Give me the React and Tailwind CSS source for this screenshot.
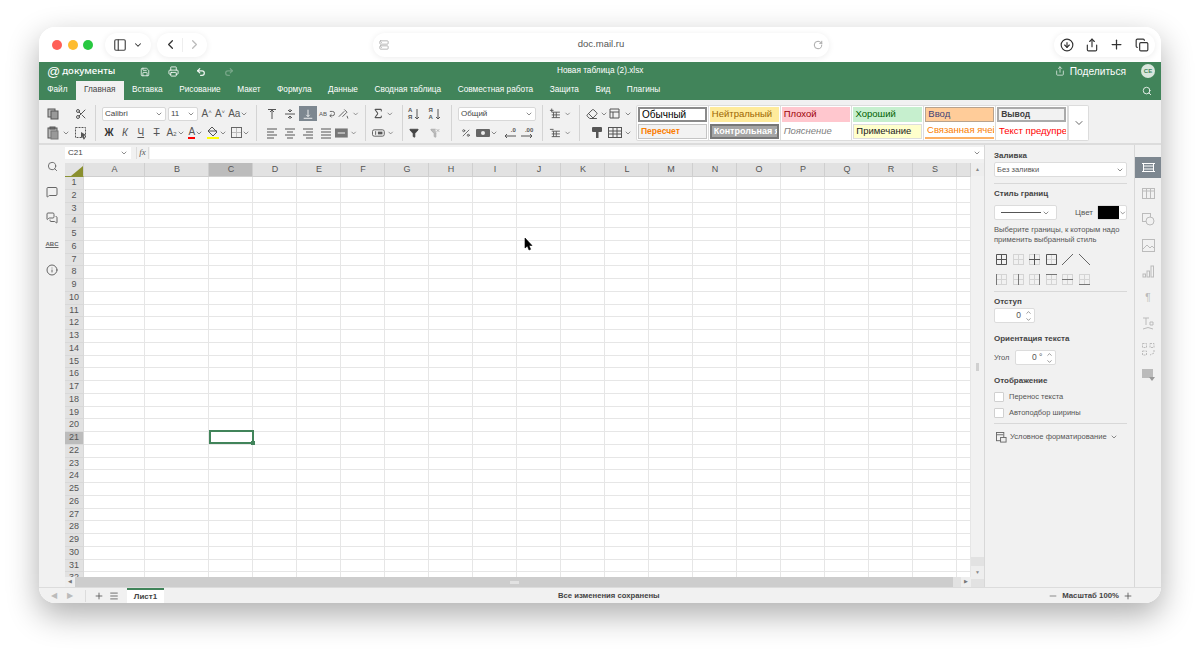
import React from "react";
import { Search, MessageSquare, MessagesSquare, Info, CircleArrowDown, Share, Plus, Copy, ChevronDown, ChevronLeft, ChevronRight, ChevronUp, RotateCw, PanelLeft, Save, Printer, Undo2, Redo2, Scissors, Sigma, Funnel, FunnelX, Percent, Eraser, Minus, Menu, Server } from "lucide-react";

const font = "font-['Liberation_Sans',Arial,sans-serif]";
const Chev = ({ c = "text-[#555]", s = 8 }) => <ChevronDown size={s} strokeWidth={2} className={c} />;

const Ic = ({ children, w = 14 }) => (
  <svg width={w} height="14" viewBox="0 0 14 14" fill="none" stroke="#555" strokeWidth="1">{children}</svg>
);
const TB = ({ children, className = "w-[18px]" }) => <div className={`flex h-[16px] items-center justify-center gap-[2px] ${className}`}>{children}</div>;
const Sep = () => <div className="mx-[6px] h-[36px] w-px shrink-0 bg-[#d4d4d4]" />;
const Col = ({ className, children }) => <div className={`flex h-[35px] shrink-0 flex-col justify-between ${className}`}>{children}</div>;
const Row = ({ children }) => <div className="flex h-[16px] items-center">{children}</div>;
const Lines = ({ d }) => <Ic>{d.map((l, i) => <path key={i} d={l} />)}</Ic>;

const CopyI = () => <Ic><rect x="2" y="2" width="7" height="8" fill="#bbb" /><rect x="5" y="4" width="7" height="8" fill="#999" /></Ic>;
const PasteI = () => <Ic><rect x="2" y="2" width="9" height="10" fill="#bbb" /><rect x="5" y="5" width="7" height="8" fill="#999" stroke="#777" /><rect x="4" y="1" width="5" height="2" fill="#777" /></Ic>;
const SelI = () => <Ic><rect x="1.5" y="1.5" width="10" height="10" strokeDasharray="2 1" /><path d="M7 6l5 3-2 1 1 3-1.5.5-1-3L7 12z" fill="#555" stroke="none" /></Ic>;

const styles1 = [
  ["Обычный", "bg-white text-black border-2 border-[#8a8a8a] text-[10px]"],
  ["Нейтральный", "bg-[#ffeb9c] text-[#9c6500] text-[9.5px]"],
  ["Плохой", "bg-[#ffc7ce] text-[#9c0006] text-[9.5px]"],
  ["Хороший", "bg-[#c6efce] text-[#006100] text-[9.5px]"],
  ["Ввод", "bg-[#ffcc99] text-[#3f3f76] border border-[#b7a28e] text-[9.5px]"],
  ["Вывод", "bg-[#f2f2f2] text-[#3f3f3f] font-bold border-2 border-[#aaaaaa] text-[8.5px]"],
];
const styles2 = [
  ["Пересчет", "bg-[#f2f2f2] text-[#fa7d00] font-bold border border-[#c4c4c4] text-[8.5px]"],
  ["Контрольная ячейка", "bg-[#a5a5a5] text-white font-bold border-2 border-[#777] text-[9px]"],
  ["Пояснение", "bg-white text-[#7f7f7f] italic text-[9.5px]"],
  ["Примечание", "bg-[#ffffcc] text-[#222] border border-[#dddddd] text-[9.5px]"],
  ["Связанная ячейка", "bg-white text-[#fa7d00] border-b-2 border-[#fdb064] text-[9.5px]"],
  ["Текст предупреждения", "bg-white text-[#ff0000] text-[9.5px]"],
];
const StyleRow = ({ items }) => (
  <div className="flex h-[17px]">
    {items.map(([t, c]) => (
      <div key={t} className="w-[72px] border-r border-[#dcdcdc] px-px py-px">
        <div className={`flex h-[15px] items-center overflow-hidden whitespace-nowrap px-[2px] ${c}`}>{t}</div>
      </div>
    ))}
  </div>
);

const Toolbar = () => (
  <div className="flex h-[45px] shrink-0 items-center border-b-2 border-[#dcdcdc] bg-[#f1f1f1] pl-[6px] pt-[3px]">
    <Col className="w-[44px]">
      <Row><TB className="w-[16px]"><CopyI /></TB><div className="w-[12px]" /><TB className="w-[16px]"><Scissors size={12} color="#555" /></TB></Row>
      <Row><TB className="w-[26px]"><PasteI /><Chev /></TB><div className="w-[2px]" /><TB className="w-[16px]"><SelI /></TB></Row>
    </Col>
    <Sep />
    <Col className="w-[148px]">
      <Row>
        <div className="flex h-[14px] w-[64px] items-center justify-between rounded-[2px] border border-[#d8d8d8] bg-white px-[2px] text-[8px] text-[#444]">Calibri<Chev /></div>
        <div className="ml-[2px] flex h-[14px] w-[30px] items-center justify-between rounded-[2px] border border-[#d8d8d8] bg-white px-[2px] text-[8px] text-[#444]">11<Chev /></div>
        <div className="ml-[2px] flex w-[50px] items-center justify-around text-[10px] text-[#555]"><span>A<sup className="text-[6px]">˄</sup></span><span>A<sup className="text-[6px]">˅</sup></span><span className="flex items-center">Aa<Chev /></span></div>
      </Row>
      <Row>
        <div className="flex w-full items-center justify-between pl-[1px] text-[10px] text-[#555]">
          <b className="w-[12px] text-center text-[#333]">Ж</b><i className="w-[12px] text-center">К</i><u className="w-[12px] text-center">Ч</u><s className="w-[12px] text-center">Т</s>
          <span className="flex items-center">A<sub className="text-[6px]">2</sub><Chev /></span>
          <span className="flex items-center"><span className="border-b-2 border-[#ff0000] leading-[11px]">A</span><Chev /></span>
          <span className="flex items-center"><span className="border-b-2 border-[#ffff00] leading-[0]"><svg width="12" height="11" viewBox="0 0 12 11" fill="none" stroke="#555"><path d="M5 1l5 5-4 4-5-5z" /><path d="M1 5h9" /></svg></span><Chev /></span>
          <span className="flex items-center"><svg width="11" height="11" viewBox="0 0 11 11" fill="none" stroke="#666"><rect x=".5" y=".5" width="10" height="10" /><path d="M5.5 1v9M1 5.5h9" stroke="#bbb" /></svg><Chev /></span>
        </div>
      </Row>
    </Col>
    <Sep />
    <Col className="w-[96px]">
      <Row>
        <TB><Lines d={["M3 2.5h8", "M7 3v9", "M5 5l2-2 2 2"]} /></TB>
        <TB><Lines d={["M2 7h10", "M7 2v3M7 9v3", "M5 3l2 2 2-2M5 11l2-2 2 2"]} /></TB>
        <div className="flex h-[15px] w-[18px] items-center justify-center bg-[#7d8790]"><svg width="12" height="12" viewBox="0 0 14 14" fill="none" stroke="#fff"><path d="M2 12h10M7 2v8M5 8l2 2 2-2" /></svg></div>
        <TB className="w-[20px]"><span className="text-[6px] leading-none text-[#555]">AB</span><svg width="6" height="10" viewBox="0 0 7 10" fill="none" stroke="#555"><path d="M1 2h3a2 2 0 010 5H1M3 5L1 7l2 2" /></svg></TB>
        <TB className="w-[22px]"><Lines d={["M2 10L8 4", "M8 2l3 3-5 5", "M11 9l1 3"]} /><Chev /></TB>
      </Row>
      <Row>
        <TB><Lines d={["M2 3h10M2 6h7M2 9h10M2 12h7"]} /></TB>
        <TB><Lines d={["M2 3h10M4 6h6M2 9h10M4 12h6"]} /></TB>
        <TB><Lines d={["M2 3h10M5 6h7M2 9h10M5 12h7"]} /></TB>
        <TB><Lines d={["M2 3h10M2 6h10M2 9h10M2 12h10"]} /></TB>
        <TB className="w-[22px]"><svg width="14" height="12" viewBox="0 0 14 12" fill="#777"><rect y="1" width="14" height="10" /><path d="M3 6h8" stroke="#fff" /></svg><Chev /></TB>
      </Row>
    </Col>
    <Sep />
    <Col className="w-[24px]">
      <Row><TB className="w-[22px]"><Sigma size={13} color="#555" /><Chev /></TB></Row>
      <Row><TB className="w-[22px]"><svg width="14" height="10" viewBox="0 0 14 10" fill="none" stroke="#555"><rect x=".5" y="1.5" width="13" height="7" rx="2" /><path d="M4 3v4" /><rect x="7" y="4" width="4" height="2" fill="#555" /></svg><Chev /></TB></Row>
    </Col>
    <Sep />
    <Col className="-ml-[5px] w-[41px]">
      <Row><TB className="w-[22px]"><span className="flex flex-col text-[6px] font-bold leading-[7px] text-[#555]"><span>A</span><span>Я</span></span><svg width="6" height="12" viewBox="0 0 6 12" fill="none" stroke="#555"><path d="M3 1v10M1 9l2 2 2-2" /></svg></TB><TB className="w-[22px]"><span className="flex flex-col text-[6px] font-bold leading-[7px] text-[#555]"><span>Я</span><span>A</span></span><svg width="6" height="12" viewBox="0 0 6 12" fill="none" stroke="#555"><path d="M3 1v10M1 9l2 2 2-2" /></svg></TB></Row>
      <Row><TB className="w-[22px]"><Funnel size={10} fill="#444" color="#444" /></TB><TB className="w-[22px]"><FunnelX size={10} fill="#bbb" color="#aaa" /></TB></Row>
    </Col>
    <Sep />
    <Col className="w-[78px]">
      <Row><div className="flex h-[14px] w-[78px] items-center justify-between rounded-[2px] border border-[#d8d8d8] bg-white px-[2px] text-[8px] text-[#444]">Общий<Chev /></div></Row>
      <Row>
        <div className="flex w-full items-center justify-around">
          <Percent size={10} color="#555" />
          <span className="flex items-center"><svg width="14" height="10" viewBox="0 0 14 10" fill="#666"><rect y="1" width="14" height="8" rx="1" /><circle cx="7" cy="5" r="2" fill="#eee" /></svg><Chev /></span>
          <span className="flex flex-col items-end text-[6px] font-bold leading-[6px] text-[#555]">.0<svg width="12" height="5" viewBox="0 0 12 5" fill="none" stroke="#555"><path d="M12 3H1M3 1L1 3l2 2" /></svg></span>
          <span className="flex flex-col items-end text-[6px] font-bold leading-[6px] text-[#555]">.00<svg width="12" height="5" viewBox="0 0 12 5" fill="none" stroke="#555"><path d="M0 3h11M9 1l2 2-2 2" /></svg></span>
        </div>
      </Row>
    </Col>
    <Sep />
    <Col className="w-[24px]">
      <Row><TB className="w-[22px]"><Lines d={["M3 5h9M3 8h9M3 11h9M5 5v6M8 5v6", "M1 3h4M3 1v4"]} /><Chev /></TB></Row>
      <Row><TB className="w-[22px]"><Lines d={["M3 5h9M3 8h9M3 11h9M5 5v6M8 5v6", "M1 3h4"]} /><Chev /></TB></Row>
    </Col>
    <Sep />
    <Col className="w-[46px]">
      <Row><TB className="w-[22px]"><Eraser size={12} color="#555" /><Chev /></TB><TB className="w-[24px]"><Lines d={["M2 2h9v9H2z", "M2 5h9M5 5v6"]} /><Chev /></TB></Row>
      <Row><TB className="w-[22px]"><svg width="12" height="13" viewBox="0 0 12 13" fill="#555"><rect x="1" y="1" width="10" height="5" rx="1" /><rect x="5" y="6" width="2.5" height="6" /></svg></TB><TB className="w-[24px]"><svg width="14" height="11" viewBox="0 0 14 11" fill="none" stroke="#555"><rect x=".5" y=".5" width="13" height="10" /><path d="M1 4h12M1 7h12M5 1v9M9 1v9" /></svg><Chev /></TB></Row>
    </Col>
    <div className="ml-[4px] h-[36px] w-[433px] shrink-0 rounded-l-[2px] border border-[#dcdcdc] bg-white">
      <StyleRow items={styles1} />
      <StyleRow items={styles2} />
    </div>
    <div className="flex h-[36px] w-[20px] shrink-0 items-center justify-center rounded-r-[2px] border border-l-0 border-[#dcdcdc] bg-white"><ChevronDown size={12} color="#666" /></div>
  </div>
);

const colsT = [["A", "w-[61px]"], ["B", "w-[64px]"], ["C", "w-[44px]"], ...("DEFGHIJKLMNOPQRS".split("").map((l) => [l, "w-[44px]"])), ["", "w-[14px]"]];
const rows = Array.from({ length: 32 }, (_, i) => i + 1);

const Sheet = () => (
  <div className="relative min-h-0 flex-1 overflow-hidden bg-white">
    <div className="flex h-[14px] bg-[#e2e2e2] text-[9px] text-[#555]">
      <div className="flex h-[14px] w-[19px] shrink-0 items-end justify-end border-r border-[#d0d0d0] border-b border-b-[#8a9233]">
        <div className="h-0 w-0 border-b-[10px] border-l-[12px] border-b-[#8a8f2e] border-l-transparent" />
      </div>
      {colsT.map(([l, w]) => (
        <div key={l || "T"} className={`flex shrink-0 items-center justify-center border-r border-b border-[#cfcfcf] pl-px ${w} ${l === "C" ? "bg-[#bcbcbc]" : ""}`}>{l}</div>
      ))}
    </div>
    {rows.map((r) => (
      <div key={r} className="flex h-[12.75px]">
        <div className={`flex w-[19px] shrink-0 items-center justify-center border-r border-b border-[#d8d8d8] text-[9px] text-[#555] ${r === 21 ? "bg-[#bcbcbc]" : "bg-[#e2e2e2]"}`}>{r}</div>
        {colsT.map(([l, w]) => <div key={l || "T"} className={`shrink-0 border-r border-b border-[#e6e6e6] ${w}`} />)}
      </div>
    ))}
    <div className="absolute left-[144px] top-[267px] h-[14px] w-[45px] border-2 border-[#41845a]">
      <div className="absolute bottom-[-3px] right-[-3px] h-[4px] w-[4px] bg-[#41845a]" />
    </div>
    <svg className="absolute left-[459px] top-[74px]" width="10" height="14" viewBox="0 0 10 14"><path d="M1 1v10l2.4-2 1.6 4 1.6-.7-1.6-3.8H8z" fill="#000" stroke="#000" strokeWidth=".6" /></svg>
  </div>
);

const BorderI = ({ d, dark }) => (
  <svg width="11" height="11" viewBox="0 0 11 11" fill="none" stroke={dark ? "#666" : "#ccc"}>
    <rect x=".5" y=".5" width="10" height="10" stroke="#d4d4d4" />
    <path d="M5.5 1v9M1 5.5h9" stroke="#d4d4d4" />
    <path d={d} stroke={dark ? "#555" : "#777"} />
  </svg>
);
const Label = ({ children, className = "" }) => <div className={`text-[8px] font-bold leading-[10px] text-[#444] ${className}`}>{children}</div>;
const Divider = ({ className }) => <div className={`h-px w-full bg-[#d8d8d8] ${className}`} />;
const Spin = ({ v, w }) => (
  <div className={`flex h-[15px] items-center justify-end rounded-[2px] border border-[#dcdcdc] bg-white pr-[2px] text-[8.5px] text-[#555] ${w}`}>
    {v}
    <span className="ml-[4px] flex flex-col"><ChevronUp size={7} color="#555" /><ChevronDown size={7} color="#555" /></span>
  </div>
);
const Check = ({ t, className }) => (
  <div className={`flex h-[11px] items-center gap-[5px] text-[7.5px] text-[#555] ${className}`}>
    <div className="h-[10px] w-[10px] rounded-[1px] border border-[#d0d0d0] bg-white" />{t}
  </div>
);

const Panel = () => (
  <div className="flex w-[150px] shrink-0 flex-col border-l border-[#d8d8d8] bg-[#f1f1f1] pl-[9px] pr-[7px] pt-[6px]">
    <Label>Заливка</Label>
    <div className="mt-px flex h-[15px] items-center justify-between rounded-[2px] border border-[#dcdcdc] bg-white px-[2px] text-[7.5px] text-[#555]">Без заливки<Chev /></div>
    <Divider className="mt-[6px]" />
    <Label className="mt-[5px]">Стиль границ</Label>
    <div className="mt-[6px] flex h-[15px] items-center justify-between">
      <div className="flex h-[15px] w-[63px] items-center justify-between rounded-[2px] border border-[#dcdcdc] bg-white px-[6px]"><div className="h-px w-[40px] bg-[#555]" /><Chev /></div>
      <div className="flex items-center gap-[4px] text-[8px] text-[#555]">Цвет
        <div className="flex h-[15px] w-[30px] items-center rounded-[2px] border border-[#dcdcdc] bg-white"><div className="h-[13px] w-[22px] bg-black" /><Chev /></div>
      </div>
    </div>
    <div className="mt-[5px] text-[7.6px] leading-[10px] text-[#555]">Выберите границы, к которым надо применить выбранный стиль</div>
    <div className="mt-[9px] flex gap-[5.5px] pl-[2px]">
      <BorderI dark d="M.5.5h10v10H.5zM5.5 0v11M0 5.5h11" />
      <BorderI d="" />
      <BorderI dark d="M5.5 0v11M0 5.5h11" />
      <BorderI dark d="M.5.5h10v10H.5z" />
      <svg width="11" height="11" viewBox="0 0 11 11" fill="none" stroke="#666"><path d="M0 11L11 0" /></svg>
      <svg width="11" height="11" viewBox="0 0 11 11" fill="none" stroke="#666"><path d="M0 0l11 11" /></svg>
    </div>
    <div className="mt-[9px] flex gap-[5.5px] pl-[2px]">
      <BorderI d="M.5 0v11" /><BorderI d="M5.5 0v11" /><BorderI d="M10.5 0v11" /><BorderI d="M0 .5h11" /><BorderI d="M0 5.5h11" /><BorderI d="M0 10.5h11" />
    </div>
    <Divider className="mt-[6px]" />
    <Label className="mt-[5px]">Отступ</Label>
    <Spin v="0" w="mt-px w-[41px]" />
    <Label className="mt-[11px]">Ориентация текста</Label>
    <div className="mt-[6px] flex items-center gap-[6px] text-[7.5px] text-[#555]">Угол <Spin v="0 °" w="w-[41px]" /></div>
    <Label className="mt-[11px]">Отображение</Label>
    <Check t="Перенос текста" className="mt-[5px]" />
    <Check t="Автоподбор ширины" className="mt-[5px]" />
    <Divider className="mt-[5px]" />
    <div className="mt-[6px] flex h-[14px] items-center gap-[3px] pl-[2px] text-[7.6px] text-[#555]">
      <svg width="11" height="11" viewBox="0 0 12 12" fill="none" stroke="#666"><rect x=".5" y=".5" width="8" height="9" /><path d="M1 3h7" /><rect x="5" y="6" width="6" height="5" fill="#eee" /></svg>
      <span>Условное форматирование</span><Chev />
    </div>
  </div>
);

const railIcons = [
  <svg key="1" width="13" height="11" viewBox="0 0 13 11" fill="none" stroke="#fff"><rect x="1.5" y="1.5" width="10" height="8" /><path d="M0 1.5h13M0 9.5h13M1.5 4h10M1.5 7h10" /></svg>,
  <svg key="2" width="13" height="11" viewBox="0 0 13 11" fill="none" stroke="#bbb"><rect x=".5" y=".5" width="12" height="10" /><path d="M4.5 0v11M8.5 0v11M0 3h13" /></svg>,
  <svg key="3" width="13" height="13" viewBox="0 0 13 13" fill="none" stroke="#bbb"><rect x=".5" y=".5" width="8" height="8" /><circle cx="8" cy="8" r="4" fill="#f1f1f1" /></svg>,
  <svg key="4" width="13" height="13" viewBox="0 0 13 13" fill="none" stroke="#bbb"><rect x=".5" y=".5" width="12" height="12" /><path d="M1 10l4-4 3 3 2-2 2 2" /></svg>,
  <svg key="5" width="13" height="13" viewBox="0 0 13 13" fill="none" stroke="#bbb"><rect x="1" y="9" width="2.5" height="3" /><rect x="5" y="6" width="2.5" height="6" /><rect x="9" y="1" width="2.5" height="11" /></svg>,
  <span key="6" className="text-[10px] leading-none text-[#bbb]">¶</span>,
  <svg key="7" width="13" height="14" viewBox="0 0 13 14" fill="none" stroke="#bbb"><path d="M1 1h6M4 1v7" /><path d="M8 5h3v3H8z" /><path d="M1 12q5-3 10 0" /></svg>,
  <svg key="8" width="13" height="13" viewBox="0 0 13 13" fill="none" stroke="#bbb" strokeDasharray="2 1"><rect x=".5" y=".5" width="4" height="4" /><rect x="8" y=".5" width="4" height="4" /><rect x=".5" y="8" width="4" height="4" /><path d="M12 7v3l-4 2" strokeDasharray="" /></svg>,
  <svg key="9" width="13" height="13" viewBox="0 0 13 13"><rect x="0" y="0" width="11" height="9" fill="#bbb" /><path d="M7 8h6l-3 4z" fill="#999" /></svg>,
];

export default function App() {
  return (
    <div className={`h-[655px] w-[1200px] overflow-hidden bg-white pl-[39px] pt-[27px] ${font}`}>
      <div className="flex h-[576px] w-[1122px] flex-col overflow-hidden rounded-[16px] bg-white shadow-[0_12px_32px_rgba(0,0,0,0.32)]">
        {/* Safari bar */}
        <div className="flex h-[35px] shrink-0 items-center bg-white pl-[13px] pr-[6px]">
          <div className="h-[10px] w-[10px] rounded-full bg-[#ff5f57]" />
          <div className="ml-[5.5px] h-[10px] w-[10px] rounded-full bg-[#febc2e]" />
          <div className="ml-[5.5px] h-[10px] w-[10px] rounded-full bg-[#28c840]" />
          <div className="ml-[12px] flex h-[24px] w-[46px] items-center justify-center gap-[6px] rounded-full bg-white shadow-[0_1px_6px_rgba(0,0,0,0.08)]"><PanelLeft size={14} color="#444" /><ChevronDown size={10} color="#333" strokeWidth={2.5} /></div>
          <div className="ml-[6px] flex h-[24px] w-[50px] items-center justify-center gap-[4px] rounded-full bg-white shadow-[0_1px_6px_rgba(0,0,0,0.08)]"><ChevronLeft size={15} color="#333" /><div className="h-[14px] w-px bg-[#eee]" /><ChevronRight size={15} color="#bbb" /></div>
          <div className="ml-[166px] flex h-[24px] w-[456px] items-center justify-between rounded-full bg-white px-[6px] shadow-[0_1px_6px_rgba(0,0,0,0.08)]">
            <Server size={10} color="#aaa" />
            <span className="text-[9.5px] text-[#555]">doc.mail.ru</span>
            <RotateCw size={10} color="#999" />
          </div>
          <div className="ml-auto flex h-[24px] w-[101px] items-center justify-between rounded-full bg-white px-[6px] shadow-[0_1px_6px_rgba(0,0,0,0.08)]">
            <CircleArrowDown size={14} color="#333" /><Share size={14} color="#333" /><Plus size={15} color="#333" /><Copy size={14} color="#333" />
          </div>
        </div>
        {/* Green header */}
        <div className="h-[38px] shrink-0 bg-[#41845a] text-white">
          <div className="relative flex h-[19px] items-center pl-[8px]">
            <span className="text-[13px] leading-none">@</span>
            <span className="ml-[2px] font-['Noto_Sans',sans-serif] text-[9.6px] font-medium">документы</span>
            <div className="absolute left-[101px] flex items-center gap-[17.5px] text-white/90">
              <Save size={10} /><Printer size={11} /><Undo2 size={10} strokeWidth={3} /><Redo2 size={10} strokeWidth={3} className="opacity-30" />
            </div>
            <span className="absolute left-[518px] text-[8.25px]">Новая таблица (2).xlsx</span>
            <div className="ml-auto flex items-center pr-[6px]">
              <Share size={10} className="opacity-80" />
              <span className="ml-[5px] text-[10.2px]">Поделиться</span>
              <span className="ml-[15px] flex h-[14px] w-[14px] items-center justify-center rounded-full bg-[#d9e6dd] text-[6px] font-bold text-[#41845a]">CE</span>
            </div>
          </div>
          <div className="flex h-[19px] items-end text-[8.25px]">
            {["Файл", "Главная", "Вставка", "Рисование", "Макет", "Формула", "Данные", "Сводная таблица", "Совместная работа", "Защита", "Вид", "Плагины"].map((t) => (
              <div key={t} className={`flex h-[19px] items-center px-[8.25px] ${t === "Главная" ? "bg-[#f1f1f1] text-[#444]" : ""}`}>{t}</div>
            ))}
            <Search size={10} className="mb-[4px] ml-auto mr-[9px]" />
          </div>
        </div>
        <Toolbar />
        {/* Content */}
        <div className="flex min-h-0 flex-1 bg-[#f1f1f1]">
          <div className="flex w-[26px] shrink-0 flex-col items-center gap-[14px] pt-[16px]">
            <Search size={11} color="#666" />
            <MessageSquare size={12} color="#666" />
            <MessagesSquare size={12} color="#666" />
            <span className="text-[6px] font-bold leading-[12px] text-[#666] underline">ABC</span>
            <Info size={12} color="#666" />
          </div>
          <div className="flex min-w-0 flex-1 flex-col">
            <div className="flex shrink-0 items-stretch gap-px pt-[2px]">
              <div className="flex h-[12px] w-[66px] items-center justify-between bg-white px-[3px] text-[8px] text-[#444]">C21<Chev /></div>
              <div className="ml-[4px] flex h-[12px] w-[13px] items-center justify-center border-x border-[#dcdcdc] font-['Liberation_Serif',serif] text-[9px] italic text-[#555]">fx</div>
              <div className="flex h-[12px] flex-1 items-center justify-end bg-white pr-[3px]"><Chev /></div>
            </div>
            <div className="h-[4px] shrink-0" />
            <div className="flex min-h-0 flex-1">
              <div className="flex min-w-0 flex-1 flex-col">
                <Sheet />
                <div className="flex h-[10px] shrink-0 items-center bg-[#cdcdcd]">
                  <div className="flex h-[10px] w-[10px] items-center justify-center bg-[#eeeeee] text-[5px] text-[#777]">◀</div>
                  <div className="flex flex-1 justify-center"><div className="h-[3px] w-[9px] bg-[#e2e2e2]" /></div>
                  <div className="h-[10px] w-[8px] bg-[#e2e2e2]" />
                  <div className="flex h-[10px] w-[10px] items-center justify-center bg-[#eeeeee] text-[5px] text-[#777]">▶</div>
                </div>
              </div>
              <div className="flex w-[13px] shrink-0 flex-col bg-[#e2e2e2]">
                <div className="flex h-[13px] items-center justify-center bg-[#eeeeee] text-[5px] text-[#888]">▲</div>
                <div className="flex h-[381px] items-center justify-center bg-[#f1f1f1]"><div className="h-[8px] w-[3px] bg-[#d0d0d0]" /></div>
                <div className="flex-1" />
                <div className="mb-[8px] flex h-[13px] items-center justify-center bg-[#eeeeee] text-[5px] text-[#888]">▼</div>
              </div>
            </div>
          </div>
          <Panel />
          <div className="flex w-[27px] shrink-0 flex-col items-center border-l border-[#d8d8d8] pt-[12px]">
            {railIcons.map((ic, i) => (
              <div key={i} className={`flex h-[21px] w-full items-center justify-center ${i === 0 ? "mb-[5px] bg-[#7d8790]" : "mb-[5px]"}`}>{ic}</div>
            ))}
          </div>
        </div>
        {/* Status */}
        <div className="relative flex h-[16px] shrink-0 items-center border-t border-[#dcdcdc] bg-[#f1f1f1] text-[8px] text-[#444]">
          <div className="flex w-[47px] items-center justify-center gap-[10px] border-r border-[#dcdcdc]">
            <span className="text-[8px] text-[#bbb]">◀</span><span className="text-[8px] text-[#bbb]">▶</span>
          </div>
          <div className="flex w-[41px] items-center justify-center gap-[5px]"><Plus size={10} color="#555" /><Menu size={10} color="#555" /></div>
          <div className="flex h-[16px] w-[37px] items-center justify-center border-t-2 border-[#41845a] bg-white font-bold">Лист1</div>
          <span className="absolute left-[519px] text-[7.7px] font-bold">Все изменения сохранены</span>
          <div className="ml-auto flex items-center gap-[3px] pr-[28px] text-[7.8px] font-bold"><Minus size={10} color="#777" /><span className="mx-[1px]">Масштаб 100%</span><Plus size={10} color="#555" /></div>
        </div>
      </div>
    </div>
  );
}
